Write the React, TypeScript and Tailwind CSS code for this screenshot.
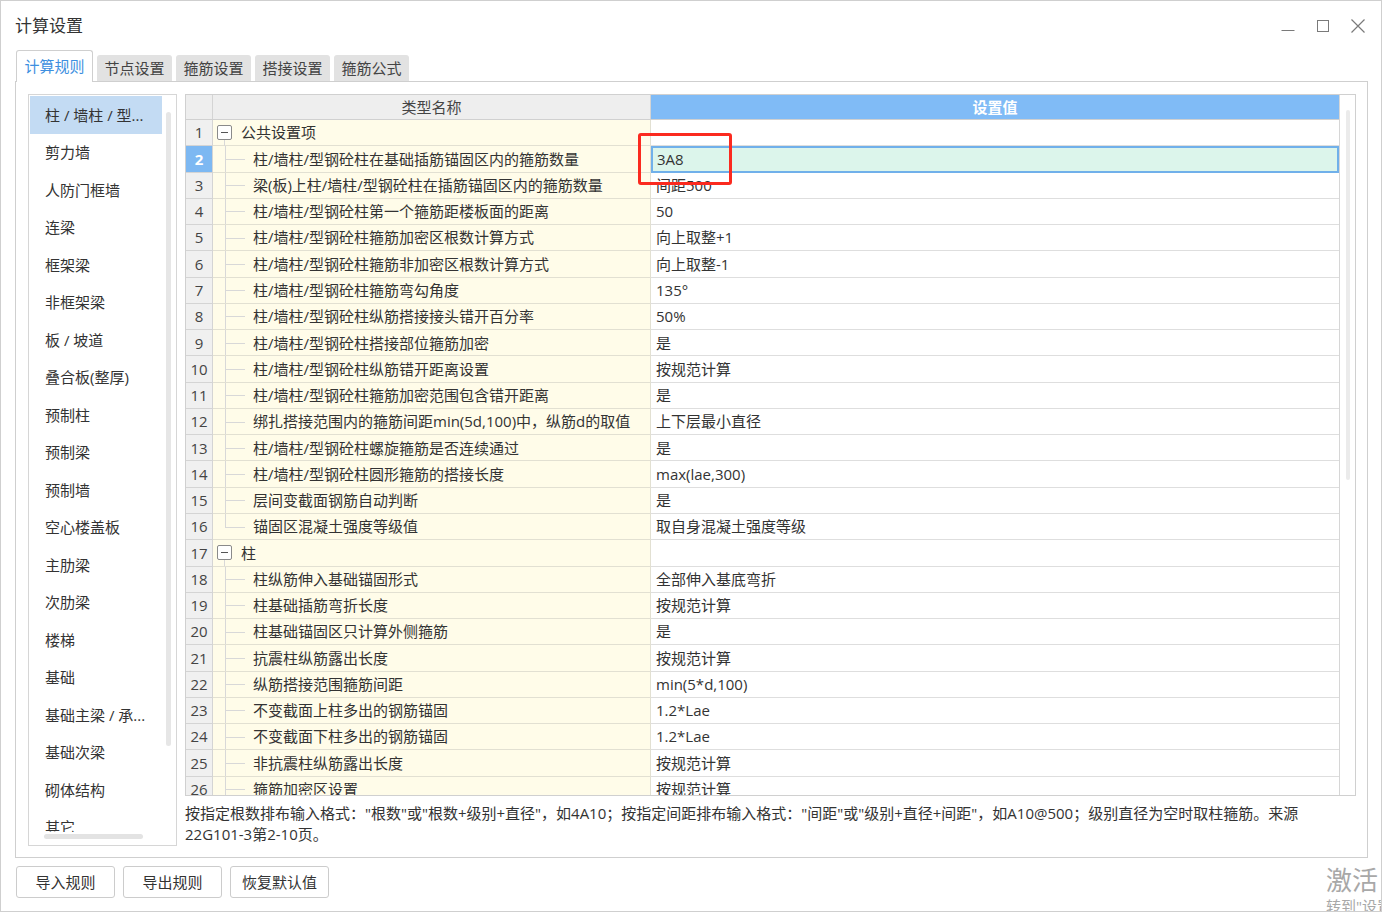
import React from 'react'

const categories = [
  '柱 / 墙柱 / 型...',
  '剪力墙',
  '人防门框墙',
  '连梁',
  '框架梁',
  '非框架梁',
  '板 / 坡道',
  '叠合板(整厚)',
  '预制柱',
  '预制梁',
  '预制墙',
  '空心楼盖板',
  '主肋梁',
  '次肋梁',
  '楼梯',
  '基础',
  '基础主梁 / 承...',
  '基础次梁',
  '砌体结构',
  '其它',
]

type Row = { name: string; value: string; group?: boolean; last?: boolean }

const rows: Row[] = [
  { name: '公共设置项', value: '', group: true },
  { name: '柱/墙柱/型钢砼柱在基础插筋锚固区内的箍筋数量', value: '3A8' },
  { name: '梁(板)上柱/墙柱/型钢砼柱在插筋锚固区内的箍筋数量', value: '间距500' },
  { name: '柱/墙柱/型钢砼柱第一个箍筋距楼板面的距离', value: '50' },
  { name: '柱/墙柱/型钢砼柱箍筋加密区根数计算方式', value: '向上取整+1' },
  { name: '柱/墙柱/型钢砼柱箍筋非加密区根数计算方式', value: '向上取整-1' },
  { name: '柱/墙柱/型钢砼柱箍筋弯勾角度', value: '135°' },
  { name: '柱/墙柱/型钢砼柱纵筋搭接接头错开百分率', value: '50%' },
  { name: '柱/墙柱/型钢砼柱搭接部位箍筋加密', value: '是' },
  { name: '柱/墙柱/型钢砼柱纵筋错开距离设置', value: '按规范计算' },
  { name: '柱/墙柱/型钢砼柱箍筋加密范围包含错开距离', value: '是' },
  { name: '绑扎搭接范围内的箍筋间距min(5d,100)中，纵筋d的取值', value: '上下层最小直径' },
  { name: '柱/墙柱/型钢砼柱螺旋箍筋是否连续通过', value: '是' },
  { name: '柱/墙柱/型钢砼柱圆形箍筋的搭接长度', value: 'max(lae,300)' },
  { name: '层间变截面钢筋自动判断', value: '是' },
  { name: '锚固区混凝土强度等级值', value: '取自身混凝土强度等级', last: true },
  { name: '柱', value: '', group: true },
  { name: '柱纵筋伸入基础锚固形式', value: '全部伸入基底弯折' },
  { name: '柱基础插筋弯折长度', value: '按规范计算' },
  { name: '柱基础锚固区只计算外侧箍筋', value: '是' },
  { name: '抗震柱纵筋露出长度', value: '按规范计算' },
  { name: '纵筋搭接范围箍筋间距', value: 'min(5*d,100)' },
  { name: '不变截面上柱多出的钢筋锚固', value: '1.2*Lae' },
  { name: '不变截面下柱多出的钢筋锚固', value: '1.2*Lae' },
  { name: '非抗震柱纵筋露出长度', value: '按规范计算' },
  { name: '箍筋加密区设置', value: '按规范计算' },
]

function Branch({ last }: { last?: boolean }) {
  return (
    <div className="relative ml-[12px] h-full w-[28px] shrink-0">
      <div className={`absolute left-0 top-0 w-px bg-[#d8d8d8] ${last ? 'h-1/2' : 'h-full'}`} />
      <div className="absolute left-0 top-1/2 h-px w-[20px] bg-[#d8d8d8]" />
    </div>
  )
}

function Toggle() {
  return (
    <div className="relative ml-[4px] flex h-[15px] w-[15px] shrink-0 items-center justify-center rounded-[2px] border border-[#8a8a8a] bg-white">
      <div className="h-px w-[7px] bg-[#555]" />
      <div className="absolute left-[6px] top-[14px] h-[6px] w-px bg-[#d8d8d8]" />
    </div>
  )
}

function WindowButtons() {
  return (
    <div className="flex items-center pr-[6px] text-[#7a7a7a]">
      <div className="flex h-[30px] w-[35px] items-center justify-center">
        <svg width="16" height="16" viewBox="0 0 16 16">
          <line x1="1.5" y1="12.5" x2="14.5" y2="12.5" stroke="currentColor" strokeWidth="1" />
        </svg>
      </div>
      <div className="flex h-[30px] w-[35px] items-center justify-center">
        <svg width="16" height="16" viewBox="0 0 16 16">
          <rect x="2.5" y="2.5" width="11" height="11" fill="none" stroke="currentColor" strokeWidth="1" />
        </svg>
      </div>
      <div className="flex h-[30px] w-[35px] items-center justify-center">
        <svg width="16" height="16" viewBox="0 0 16 16">
          <path d="M1.5 1.5 L14.5 14.5 M14.5 1.5 L1.5 14.5" stroke="currentColor" strokeWidth="1.2" />
        </svg>
      </div>
    </div>
  )
}

export default function App() {
  return (
    <div className="relative flex h-[912px] w-[1382px] flex-col overflow-hidden border border-[#cfcfcf] bg-white font-[family-name:'Open_Sans','Noto_Sans_CJK_SC',sans-serif] text-[#333]">
      {/* title bar */}
      <div className="flex h-[49px] shrink-0 items-center justify-between pl-[14px]">
        <span className="text-[17px] text-[#333]">计算设置</span>
        <WindowButtons />
      </div>

      {/* tabs */}
      <div className="flex h-[31px] shrink-0 items-end pl-[15px]">
        <div className="relative z-10 -mb-px flex h-[32px] w-[77px] items-center justify-center rounded-t-[3px] border border-b-0 border-[#cfcfcf] bg-white pb-[1px] text-[15px] text-[#3d8fe0]">
          计算规则
        </div>
        {['节点设置', '箍筋设置', '搭接设置', '箍筋公式'].map((t) => (
          <div
            key={t}
            className="ml-[4px] flex h-[26px] w-[75px] items-center justify-center rounded-t-[3px] bg-[#e2e2e2] text-[15px] text-[#444]"
          >
            {t}
          </div>
        ))}
      </div>

      {/* panel */}
      <div className="ml-[14px] flex h-[777px] w-[1353px] shrink-0 border border-[#cfcfcf] pl-[12px] pt-[12px]">
        {/* category list */}
        <div className="relative h-[752px] w-[149px] shrink-0 border border-[#d6d6d6] px-px pt-px">
          <div className="h-[736px] overflow-hidden">
            {categories.map((c, i) => (
              <div
                key={c}
                className={`flex h-[37.5px] w-[132px] items-center pl-[15px] text-[15px] text-[#333] ${i === 0 ? 'bg-[#c3dbf3]' : ''}`}
              >
                {c}
              </div>
            ))}
          </div>
          <div className="absolute left-[137px] top-[17px] h-[634px] w-[5px] rounded-full bg-[#e6e6e6]" />
          <div className="absolute bottom-[6px] left-[15px] h-[5px] w-[99px] rounded-full bg-[#e3e3e3]" />
        </div>

        <div className="ml-[8px] flex w-[1171px] flex-col">
          {/* table */}
          <div className="relative flex h-[702px] w-[1171px] overflow-hidden border border-[#d0d0d0]">
            <div className="flex w-[1153px] flex-col">
              <div className="flex h-[25px] shrink-0 border-b border-[#d0d0d0] text-[15px]">
                <div className="w-[27px] shrink-0 border-r border-[#d4d4d4] bg-[#eeeeee]" />
                <div className="flex w-[438px] shrink-0 items-center justify-center border-r border-[#d4d4d4] bg-[#eeeeee] text-[#444]">
                  类型名称
                </div>
                <div className="flex w-[688px] shrink-0 items-center justify-center bg-[#80bbf6] font-semibold text-white">
                  设置值
                </div>
              </div>
              {rows.map((r, i) => {
                const n = i + 1
                const sel = n === 2
                return (
                  <div key={n} className="flex h-[26.28px] shrink-0 text-[15px]">
                    <div
                      className={`flex w-[27px] shrink-0 items-center justify-center border-b border-r border-[#d4d4d4] ${sel ? 'bg-[#7db8f2] font-bold text-white' : 'bg-[#f0f0f0] text-[#444]'}`}
                    >
                      {n}
                    </div>
                    <div className="flex w-[438px] shrink-0 items-center border-b border-r border-[#e2e0d2] bg-[#fffce9] whitespace-nowrap text-[#333]">
                      {r.group ? (
                        <>
                          <Toggle />
                          <span className="ml-[9px]">{r.name}</span>
                        </>
                      ) : (
                        <>
                          <Branch last={r.last} />
                          <span>{r.name}</span>
                        </>
                      )}
                    </div>
                    <div
                      className={`flex w-[688px] shrink-0 items-center whitespace-nowrap ${sel ? 'border-2 border-[#70b0ea] bg-[#dcf5eb] pl-[4px]' : 'border-b border-[#dedede] bg-white pl-[5px]'}`}
                    >
                      {r.value}
                    </div>
                  </div>
                )
              })}
            </div>
            <div className="relative w-[16px] shrink-0 border-l border-[#d6d6d6] bg-white">
              <div className="absolute left-[6px] top-[15px] h-[370px] w-[4px] rounded-full bg-[#ebebeb]" />
            </div>
            {/* annotation */}
            <div className="absolute left-[452px] top-[38px] h-[52px] w-[94px] rounded-[3px] border-[3px] border-[#fb2a1f]" />
          </div>

          <div className="mt-[7px] whitespace-nowrap text-[15px] leading-[21px] text-[#333]">
            按指定根数排布输入格式："根数"或"根数+级别+直径"，如4A10；按指定间距排布输入格式："间距"或"级别+直径+间距"，如A10@500；级别直径为空时取柱箍筋。来源
            <br />
            22G101-3第2-10页。
          </div>
        </div>
      </div>

      {/* buttons */}
      <div className="ml-[15px] mt-[8px] flex gap-[8px]">
        {['导入规则', '导出规则', '恢复默认值'].map((b) => (
          <div
            key={b}
            className="flex h-[32px] w-[99px] items-center justify-center rounded-[3px] border border-[#cccccc] bg-white text-[15px] text-[#333]"
          >
            {b}
          </div>
        ))}
      </div>

      {/* watermark */}
      <div className="absolute left-[1325px] top-[866px] leading-none text-[#a8a8a8]">
        <div className="text-[26px]">激活</div>
        <div className="mt-[6px] whitespace-nowrap text-[15px]">转到"设置"以激活</div>
      </div>
    </div>
  )
}
